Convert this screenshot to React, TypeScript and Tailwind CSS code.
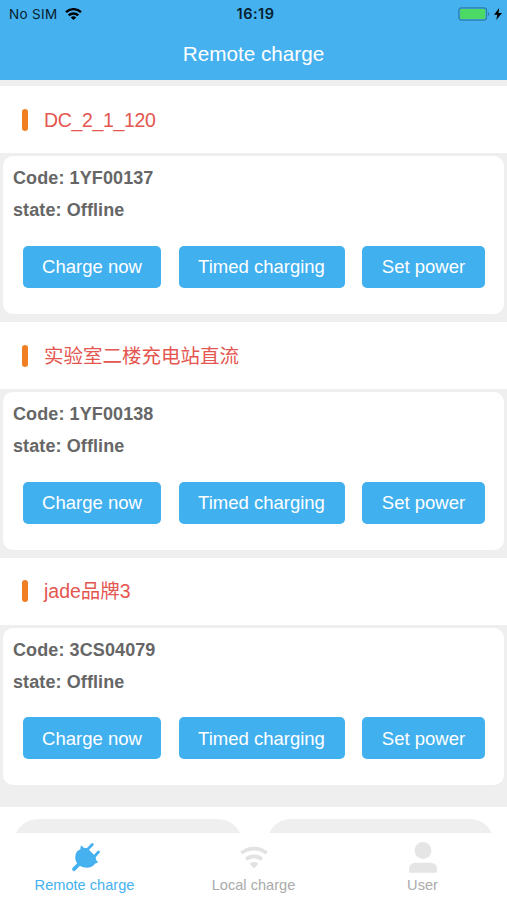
interface Station {
  name: string;
  code: string;
  state: string;
}

const stations: Station[] = [
  { name: 'DC_2_1_120', code: '1YF00137', state: 'Offline' },
  { name: '实验室二楼充电站直流', code: '1YF00138', state: 'Offline' },
  { name: 'jade品牌3', code: '3CS04079', state: 'Offline' },
];

function StatusBar() {
  return (
    <div className="h-7 grid grid-cols-[1fr_auto_1fr] items-center pl-[9px] pr-[5px] text-[#06202e]">
      <div className="flex items-center gap-[7px]">
        <span className="font-[Inter] text-[13.5px] leading-7 tracking-[0.35px]">No SIM</span>
        <svg width="17" height="12" viewBox="0 0 17 12" fill="none" stroke="#000" strokeWidth="2.4">
          <path d="M1 4.2a10.8 10.8 0 0 1 15 0" />
          <path d="M3.7 7.4a7 7 0 0 1 9.6 0" />
          <path d="M8.5 12 5.7 9.4a4.2 4.2 0 0 1 5.6 0z" fill="#000" stroke="none" />
        </svg>
      </div>
      <span className="font-[Inter] font-semibold text-[14.5px] leading-7 tracking-[0.5px]">16:19</span>
      <div className="flex items-center justify-end gap-[3px]">
        <svg width="33" height="14" viewBox="0 0 33 14">
          <rect x="0.9" y="0.9" width="27.6" height="12.2" rx="2.8" fill="none" stroke="#2f7da9" strokeWidth="1.3" />
          <rect x="2.1" y="2.1" width="25.2" height="9.8" rx="1.2" fill="#4cd964" />
          <path d="M30 5v4.2c1.6-.6 1.6-3.6 0-4.2z" fill="#2f7da9" />
        </svg>
        <svg width="8" height="12" viewBox="0 0 8 12" fill="#000">
          <path d="M5.2 0 0 6.8h3.3L2.3 12 8 5H4.5z" />
        </svg>
      </div>
    </div>
  );
}

function ActionButton({ label, className }: { label: string; className: string }) {
  return (
    <button className={`h-[42px] rounded-[5px] bg-[#41b0ef] text-white text-[18.5px] whitespace-nowrap ${className}`}>
      {label}
    </button>
  );
}

function StationBlock({ station }: { station: Station }) {
  return (
    <section className="h-[235.8px] flex flex-col">
      <div className="h-[67px] bg-white flex items-center gap-4 pl-[22px] flex-shrink-0">
        <span className="w-1.5 h-[22px] rounded-full bg-[#ef7f22]" />
        <h2 className={`text-[19.5px] leading-6 text-[#e4564f] ${station.name.includes('_') ? 'tracking-[-0.35px]' : ''}`}>
          {station.name}
        </h2>
      </div>
      <div className="mx-[3px] mt-[2.9px] h-[157.5px] rounded-[10px] bg-white pt-[6px] px-[10px]">
        <p className="text-[18px] leading-8 tracking-[0.1px] font-bold text-[#666]">Code: {station.code}</p>
        <p className="text-[18px] leading-8 tracking-[0.1px] font-bold text-[#666]">state: {station.state}</p>
        <div className="flex gap-[17.5px] pl-[10px] mt-[19.5px]">
          <ActionButton label="Charge now" className="w-[138px]" />
          <ActionButton label="Timed charging" className="w-[166px]" />
          <ActionButton label="Set power" className="w-[123px]" />
        </div>
      </div>
    </section>
  );
}

function PlugIcon() {
  return (
    <svg width="30" height="30" viewBox="0 0 30 30" fill="none" stroke="currentColor" strokeLinecap="round">
      <path
        d="M11 3.3 13.8 5.8 17.5 6.3 25.6 14.6 26 17.8 28.2 20.4 25.2 21.4C23 24.6 19.8 25.9 16 25.7 12.5 25.7 9.3 24.200 7.200 21.600 5.100 18.500 4.700 15 5.900 11.400 6.700 9.300 8.700 8 10.300 7.200Z"
        fill="currentColor"
        stroke="none"
      />
      <path d="m16.500 8.500 5.800-6M23.500 15.500l5-5.500" strokeWidth="2.700" />
      <path d="m4 27.200 5.500-5.500" strokeWidth="3.800" />
    </svg>
  );
}

function WifiIcon() {
  return (
    <svg width="28" height="23" viewBox="0 0 28 23" fill="none" stroke="currentColor" strokeWidth="3.7">
      <path d="M1.3 7.2c7-6.2 18.4-6.2 25.4 0" />
      <path d="M6 13.3c4.500-4 11.500-4 16 0" />
      <path d="M14 22.4 9.500 17.800c2.500-2.300 6.500-2.300 9 0z" fill="currentColor" stroke="none" />
    </svg>
  );
}

function UserIcon() {
  return (
    <svg width="28" height="31" viewBox="0 0 28 31" fill="currentColor">
      <circle cx="14" cy="8.5" r="8.4" />
      <path d="M0 29.5V27C0 23 3 20.8 7 20.8h14c4 0 7 2.200 7 6.200v2.500c0 1-.5 1.300-1.200 1.300H1.200C.5 30.800 0 30.500 0 29.500z" />
    </svg>
  );
}

export default function App() {
  return (
    <div className="h-screen w-full flex flex-col overflow-hidden bg-[#efefef] font-['Liberation_Sans','Noto_Sans_CJK_SC',sans-serif]">
      <header className="h-20 bg-[#45b1ef] flex-shrink-0">
        <StatusBar />
        <h1 className="text-center text-white text-[20.7px] leading-[52px]">Remote charge</h1>
      </header>

      <main className="flex-1 min-h-0 overflow-hidden pt-[6.4px]">
        {stations.map(s => (
          <StationBlock key={s.code} station={s} />
        ))}
        <div className="h-16 mt-[13px] bg-white pt-[12.5px] pl-3.5 pr-[13px] flex gap-[25px]">
          <div className="flex-1 h-12 rounded-full bg-[#efefef]" />
          <div className="flex-1 h-12 rounded-full bg-[#efefef]" />
        </div>
      </main>

      <nav className="h-[67px] bg-white grid grid-cols-3 text-[14.6px] leading-5 text-[#aaa] flex-shrink-0">
        <div className="flex flex-col items-center text-[#45b1ef]">
          <div className="h-[42px] pt-[9px] pl-px"><PlugIcon /></div>
          <span>Remote charge</span>
        </div>
        <div className="flex flex-col items-center">
          <div className="h-[42px] pt-[13px] text-[#e2e2e2]"><WifiIcon /></div>
          <span>Local charge</span>
        </div>
        <div className="flex flex-col items-center">
          <div className="h-[42px] pt-[9px] text-[#e5e5e5]"><UserIcon /></div>
          <span>User</span>
        </div>
      </nav>
    </div>
  );
}
